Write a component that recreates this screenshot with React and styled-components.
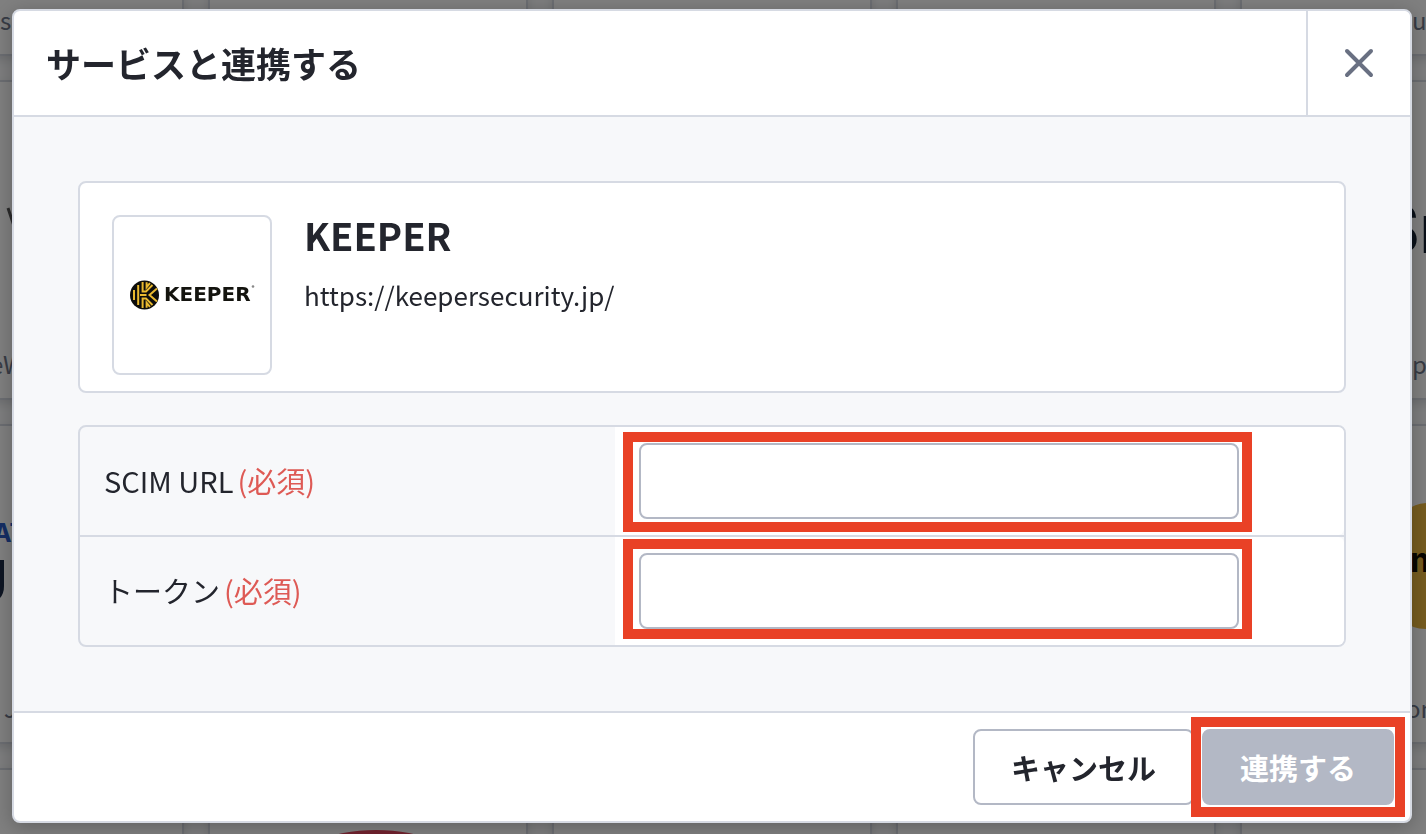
import React from 'react'
import styled, { createGlobalStyle } from 'styled-components'

const GlobalStyle = createGlobalStyle`
  * {
    box-sizing: border-box;
  }
  body {
    margin: 0;
    background: #fff;
    color: #23252d;
    font-family: 'Noto Sans CJK JP', 'Noto Sans', sans-serif;
  }
`

const Page = styled.div`
  min-height: 100vh;
`

/* service list behind the dialog */
const Backdrop = styled.div`
  position: fixed;
  inset: 0;
  overflow: hidden;
  display: grid;
  grid-template-columns: repeat(5, 320px);
  grid-auto-rows: 320px;
  gap: 24px;
  justify-content: center;
  align-content: center;
  padding: 0 2px 10px 0;
  background: #fafbfc;
`

const ServiceCard = styled.div`
  display: flex;
  flex-direction: column;
  justify-content: space-between;
  border: 2px solid #d6dae3;
  border-radius: 8px;
  background: #fff;
  box-shadow: 0 4px 8px rgba(60, 65, 90, 0.15);
  overflow: hidden;
`

const ServiceLogo = styled.svg`
  display: block;
  width: 316px;
  height: 240px;
`

const ServiceName = styled.span`
  padding: 0 0 16px ${(p) => p.$start}px;
  font-size: 24px;
  line-height: 36px;
  white-space: nowrap;
  color: #70788b;
`

const Overlay = styled.div`
  position: relative;
  min-height: 100vh;
  display: flex;
  align-items: flex-start;
  padding: 9px 14px 11px 12px;
  background: rgba(0, 0, 0, 0.5);
`

const Modal = styled.section`
  flex: 1;
  min-width: 0;
  border: 2px solid #d6dae3;
  border-radius: 8px;
  background: #fff;
  box-shadow: 0 4px 20px rgba(0, 0, 0, 0.25);
  overflow: hidden;
`

const Header = styled.header`
  display: flex;
  justify-content: space-between;
  height: 106px;
  border-bottom: 2px solid #d6dae3;
`

const Title = styled.h1`
  margin: 0;
  padding: 0 32px;
  font-size: 35px;
  line-height: 104px;
  font-weight: 700;
`

const CloseButton = styled.button`
  width: 104px;
  display: flex;
  align-items: center;
  justify-content: center;
  padding: 0;
  border: 0;
  border-left: 2px solid #d6dae3;
  background: #fff;
  cursor: pointer;
`

const Body = styled.div`
  display: flex;
  flex-direction: column;
  gap: 32px;
  padding: 64px;
  background: #f7f8fa;
`

const Service = styled.div`
  display: flex;
  gap: 32px;
  padding: 32px 32px 16px;
  border: 2px solid #d6dae3;
  border-radius: 8px;
  background: #fff;
`

const LogoBox = styled.div`
  width: 160px;
  height: 160px;
  display: flex;
  align-items: center;
  justify-content: center;
  border: 2px solid #d6dae3;
  border-radius: 8px;
`

const ServiceTitle = styled.h2`
  margin: 0;
  font-size: 38px;
  line-height: 40px;
  font-weight: 700;
`

const ServiceUrl = styled.p`
  margin: 18px 0 0;
  font-size: 26px;
  line-height: 44px;
`

const Form = styled.form`
  border: 2px solid #d6dae3;
  border-radius: 8px;
`

const Row = styled.div`
  display: grid;
  grid-template-columns: 11fr 15fr;

  & + & {
    border-top: 2px solid #d6dae3;
  }
`

const Label = styled.label`
  display: flex;
  align-items: center;
  gap: 4px;
  padding: 0 24px 2px;
  font-size: 29px;
  line-height: 44px;
`

const Required = styled.span`
  color: #de5a55;
`

const Cell = styled.div`
  padding: 16px 24px;
  border-radius: 0 6px 6px 0;
  background: #fff;
`

const Marked = styled.div`
  position: relative;
  display: flex;
  max-width: ${(p) => p.$max || 'none'};
`

/* red guide frame laid over the control */
const Mark = styled.span`
  position: absolute;
  inset: ${(p) => p.$inset};
  border: 10px solid #e94126;
  pointer-events: none;
`

const Input = styled.input`
  width: 100%;
  height: 76px;
  padding: 0 16px;
  border: 2px solid #b3b8c5;
  border-radius: 8px;
  background: #fff;
  font: inherit;
  font-size: 26px;
`

const Footer = styled.footer`
  display: flex;
  justify-content: flex-end;
  gap: 8px;
  padding: 16px;
  border-top: 2px solid #d6dae3;
`

const Button = styled.button`
  height: 76px;
  padding: 0 36px;
  border: 2px solid #b3b8c5;
  border-radius: 8px;
  background: ${(p) => (p.disabled ? '#b3b8c5' : '#fff')};
  color: ${(p) => (p.disabled ? '#fff' : '#23252d')};
  font-family: inherit;
  font-size: 29px;
  font-weight: 700;
  white-space: nowrap;
`

const services = [
  { name: 's', start: 134 },
  {},
  {},
  {},
  { name: 'u', start: 170 },
  {
    name: 'eW',
    start: 124,
    logo: (
      <path d="M142 126l10 30" stroke="#555" strokeWidth="3" />
    ),
  },
  {},
  {},
  {},
  {
    name: 'p',
    start: 170,
    logo: (
      <text x="133" y="171" fontSize="68" fontWeight="700" fontFamily="Inter, sans-serif" fill="#132032">Sn</text>
    ),
  },
  {
    name: 'J',
    start: 138,
    logo: (
      <>
        <text x="127" y="116" fontSize="25" fontWeight="700" fontFamily="Inter, sans-serif" fill="#2a5cc8">AT</text>
        <path d="M120 134h18v26q0 16-18 18z" fill="#1b2a46" />
      </>
    ),
  },
  {},
  {},
  {},
  {
    name: 'on',
    start: 164,
    logo: (
      <>
        <path d="M164 86q6-8 20-9h60v126h-60q-14 0-26-10z" fill="#ecb83e" />
        <text x="168" y="146" fontSize="34" fontWeight="700" fontFamily="Inter, sans-serif" fill="#100c04">m</text>
      </>
    ),
  },
  {},
  { logo: <ellipse cx="166" cy="100" rx="86" ry="40" fill="#e2445c" /> },
  {},
  {},
  {},
]

const KeeperLogo = () => (
  <svg width="128" height="32" viewBox="0 0 128 32" role="img" aria-label="KEEPER">
    <circle cx="16.5" cy="16" r="14.5" fill="#0d0d0b" />
    <g fill="none" stroke="#e9b92f" strokeWidth="2">
      <path d="M6 11v10M10.2 6v20" />
      <path d="M14.6 3v9.400h3.400L24.500 6M14.600 29v-9.400h3.400l6.500 6.400" />
      <path d="M12 16h6.500M29 9.500L21.500 16l7.500 6.500" />
      <path d="M18.600 3.200v5l3.400-4M18.600 28.800v-5l3.400 4" />
    </g>
    <text x="36" y="22" fontSize="20" fontWeight="700" fontFamily="'DejaVu Sans', sans-serif" fill="#14140f">KEEPER</text>
    <circle cx="125" cy="7.500" r="1.300" fill="#888" />
  </svg>
)

const App = () => {
  return (
    <Page>
      <GlobalStyle />
      <Backdrop aria-hidden="true">
        {services.map((s, i) => (
          <ServiceCard key={i}>
            <ServiceLogo viewBox="0 0 316 240">{s.logo}</ServiceLogo>
            {s.name && <ServiceName $start={s.start}>{s.name}</ServiceName>}
          </ServiceCard>
        ))}
      </Backdrop>
      <Overlay>
        <Modal role="dialog" aria-labelledby="dialog-title">
          <Header>
            <Title id="dialog-title">サービスと連携する</Title>
            <CloseButton type="button" aria-label="閉じる">
              <svg width="32" height="32" viewBox="0 0 32 32" stroke="#697082" strokeWidth="4" strokeLinecap="round">
                <path d="M4 4l24 24M28 4L4 28" />
              </svg>
            </CloseButton>
          </Header>
          <Body>
            <Service>
              <LogoBox>
                <KeeperLogo />
              </LogoBox>
              <div>
                <ServiceTitle>KEEPER</ServiceTitle>
                <ServiceUrl>https://keepersecurity.jp/</ServiceUrl>
              </div>
            </Service>
            <Form id="connect">
              <Row>
                <Label htmlFor="scim-url">
                  SCIM URL <Required>(必須)</Required>
                </Label>
                <Cell>
                  <Marked $max="600px">
                    <Input id="scim-url" type="text" />
                    <Mark $inset="-11px -13px -13px -16px" />
                  </Marked>
                </Cell>
              </Row>
              <Row>
                <Label htmlFor="token">
                  トークン <Required>(必須)</Required>
                </Label>
                <Cell>
                  <Marked $max="600px">
                    <Input id="token" type="text" />
                    <Mark $inset="-14px -13px -10px -16px" />
                  </Marked>
                </Cell>
              </Row>
            </Form>
          </Body>
          <Footer>
            <Button type="button">キャンセル</Button>
            <Marked>
              <Button type="submit" form="connect" disabled>連携する</Button>
              <Mark $inset="-12px -11px -12px -11px" />
            </Marked>
          </Footer>
        </Modal>
      </Overlay>
    </Page>
  )
}

export default App
